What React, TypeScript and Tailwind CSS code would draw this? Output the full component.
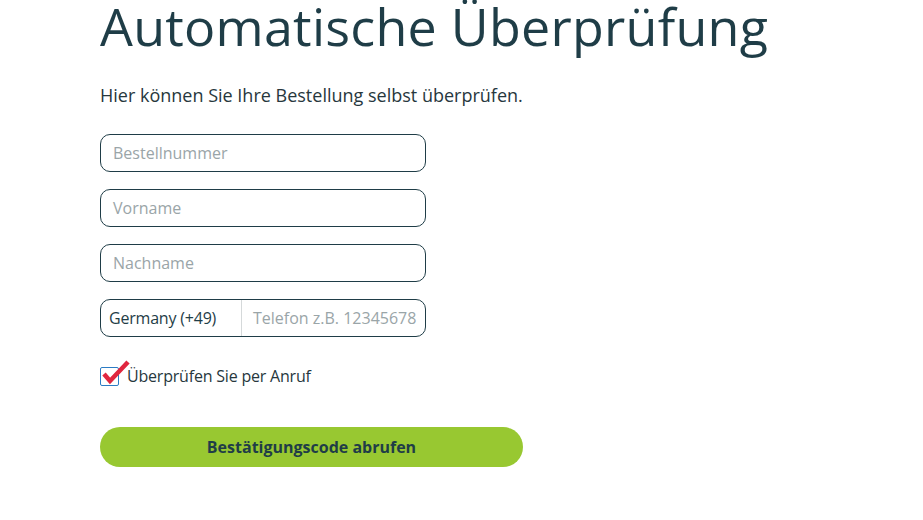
import React from "react";

export default function App() {
  const font = { fontFamily: '"Open Sans", "Noto Sans", sans-serif' };
  return (
    <div className="w-[923px] h-[520px] bg-white overflow-hidden" style={font}>
      <div className="pl-[100px] pt-0">
        <h1 className="text-[52px] leading-[60px] text-[#1f3d47] font-normal mt-[-4px] tracking-[0.25px]">
          Automatische Überprüfung
        </h1>
        <p className="mt-[27px] text-[18px] leading-[24px] text-[#27373d]">
          Hier können Sie Ihre Bestellung selbst überprüfen.
        </p>
        <div className="mt-[27px] flex flex-col gap-[17px] w-[326px]">
          {["Bestellnummer", "Vorname", "Nachname"].map((p) => (
            <div
              key={p}
              className="h-[38px] border border-[#1f3d47] rounded-[10px] flex items-center px-[12px] text-[16px] text-[#9aa5a8]"
            >
              {p}
            </div>
          ))}
          <div className="h-[38px] border border-[#1f3d47] rounded-[10px] flex items-stretch text-[16px]">
            <div className="w-[141px] flex items-center pl-[8px] text-[#1f3d47] border-r border-[#d5d9da] tracking-[-0.2px]">
              Germany (+49)
            </div>
            <div className="flex-1 flex items-center pl-[11px] text-[#9aa5a8] whitespace-nowrap">
              Telefon z.B. 12345678
            </div>
          </div>
        </div>
        <div className="mt-[29px] flex items-center gap-[8px] relative h-[20px]">
          <div className="w-[19px] h-[19px] border-[1.5px] border-[#2c7cc4] rounded-[2px]"></div>
          <svg className="absolute left-[1px] top-[-7px]" width="30" height="28" viewBox="0 0 30 28">
            <path d="M3 15 L9 22 L27 3" fill="none" stroke="#e0263f" strokeWidth="4.5" strokeLinecap="butt" strokeLinejoin="miter" />
          </svg>
          <span className="text-[16px] text-[#27373d] tracking-[-0.2px]">Überprüfen Sie per Anruf</span>
        </div>
        <button className="mt-[41px] w-[423px] h-[40px] rounded-full bg-[#98c831] text-[16px] font-bold text-[#1f3d47] flex items-center justify-center">
          Bestätigungscode abrufen
        </button>
      </div>
    </div>
  );
}
